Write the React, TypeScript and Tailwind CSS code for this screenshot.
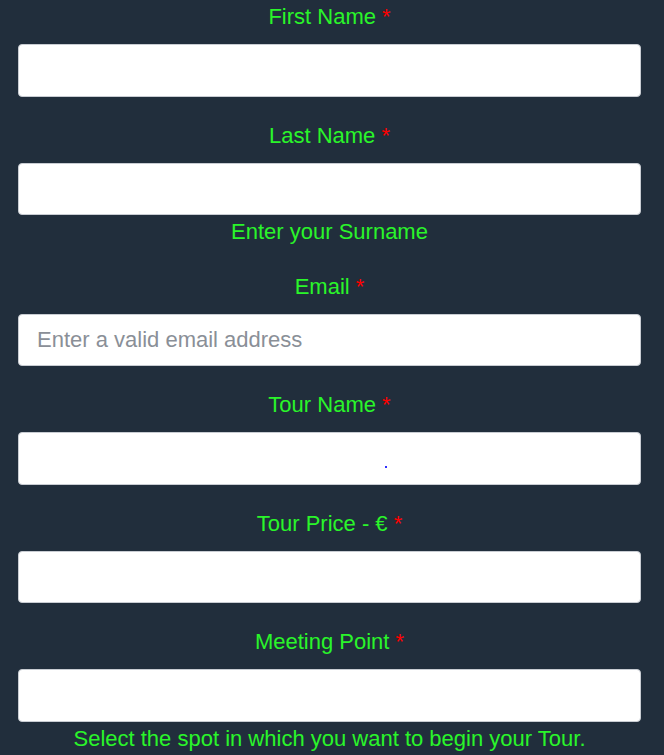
import React from "react";

type Field = {
  label: string;
  placeholder?: string;
  helper?: string;
  dot?: boolean;
};

const fields: Field[] = [
  { label: "First Name" },
  { label: "Last Name", helper: "Enter your Surname" },
  { label: "Email", placeholder: "Enter a valid email address" },
  { label: "Tour Name", dot: true },
  { label: "Tour Price - €" },
  { label: "Meeting Point", helper: "Select the spot in which you want to begin your Tour." },
];

export default function App() {
  return (
    <div
      className="min-h-[755px] w-full bg-[#212e3c] pl-[18px] pr-[23px] pt-[4px]"
      style={{ fontFamily: '"Liberation Sans", Arial, sans-serif' }}
    >
      <form className="flex flex-col">
        {fields.map((f) => (
          <div key={f.label} className={f.helper ? "mb-[29.5px]" : "mb-[26px]"}>
            <label className="block pt-px text-center text-[22px] leading-[24px] text-[#2af52a]">
              {f.label} <span className="text-[#ff0000]">*</span>
            </label>
            <div className="relative mt-[15px]">
              <input
                type="text"
                placeholder={f.placeholder}
                className="block h-[52.5px] w-full rounded-[4px] border border-[#c8ccd2] bg-white px-[18px] text-[22px] text-gray-800 outline-none placeholder:text-[#8a8f97]"
              />
              {f.dot && (
                <span className="absolute left-[367px] top-[34px] h-[2px] w-[2px] bg-[#3030ff]" />
              )}
            </div>
            {f.helper && (
              <p className="mt-[5px] text-center text-[22px] leading-[24px] text-[#2af52a]">
                {f.helper}
              </p>
            )}
          </div>
        ))}
      </form>
    </div>
  );
}
